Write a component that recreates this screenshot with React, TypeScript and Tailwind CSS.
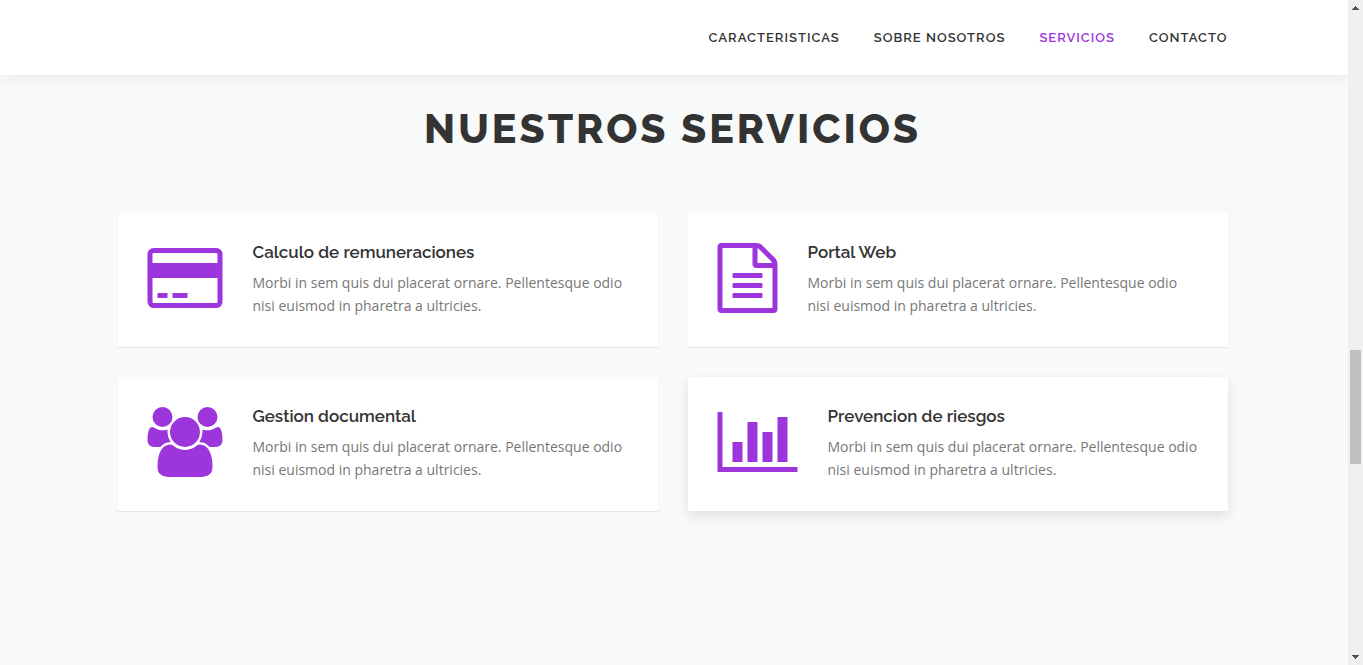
import type { ReactNode } from "react";

const description =
  "Morbi in sem quis dui placerat ornare. Pellentesque odio nisi euismod in pharetra a ultricies.";

const links = [
  { label: "CARACTERISTICAS", href: "#caracteristicas", active: false },
  { label: "SOBRE NOSOTROS", href: "#nosotros", active: false },
  { label: "SERVICIOS", href: "#servicios", active: true },
  { label: "CONTACTO", href: "#contacto", active: false },
];

function CardIcon() {
  return (
    <svg viewBox="13 0 1920 1792" className="h-[70px] w-[75px] shrink-0 overflow-visible" fill="currentColor" aria-hidden="true">
      <path
        transform="matrix(1 0 0 -1 0 1536)"
        d="M1760 1408q66 0 113-47t47-113v-1216q0-66-47-113t-113-47h-1600q-66 0-113 47t-47 113v1216q0 66 47 113t113 47h1600zM160 1280q-13 0-22.5-9.5t-9.5-22.5v-224h1664v224q0 13-9.5 22.5t-22.5 9.5h-1600zM1760 0q13 0 22.5 9.5t9.5 22.5v608h-1664v-608q0-13 9.5-22.5t22.5-9.5h1600zM256 128v128h256v-128h-256zM640 128v128h384v-128h-384z"
      />
    </svg>
  );
}

function FileIcon() {
  return (
    <svg viewBox="141 0 1536 1792" className="h-[70px] w-[60px] shrink-0 overflow-visible" fill="currentColor" aria-hidden="true">
      <path d="M1596 380q28 28 48 76t20 88v1152q0 40-28 68t-68 28h-1344q-40 0-68-28t-28-68v-1600q0-40 28-68t68-28h896q40 0 88 20t76 48zm-444-244v376h376q-10-29-22-41l-313-313q-12-12-41-22zm384 1528v-1024h-416q-40 0-68-28t-28-68v-416h-768v1536h1280zm-1024-864q0-14 9-23t23-9h704q14 0 23 9t9 23v64q0 14-9 23t-23 9h-704q-14 0-23-9t-9-23v-64zm736 224q14 0 23 9t9 23v64q0 14-9 23t-23 9h-704q-14 0-23-9t-9-23v-64q0-14 9-23t23-9h704zm0 256q14 0 23 9t9 23v64q0 14-9 23t-23 9h-704q-14 0-23-9t-9-23v-64q0-14 9-23t23-9h704z" />
    </svg>
  );
}

function UsersIcon() {
  return (
    <svg viewBox="13 0 1920 1792" className="h-[70px] w-[75px] shrink-0 overflow-visible" fill="currentColor" aria-hidden="true">
      <path
        transform="matrix(1 0 0 -1 0 1536)"
        d="M593 640q-162-5-265-128h-134q-82 0-138 40.5t-56 118.5q0 353 124 353 6 0 43.5-21t97.5-42.5 119-21.5q67 0 133 23-5-37-5-66 0-139 81-256zM1664 3q0-120-73-189.5t-194-69.5h-874q-121 0-194 69.5t-73 189.5q0 53 3.5 103.5t14 109 26.5 108.5 43 97.5 62 81 85.5 53.5 111.5 20q10 0 43-21.5t73-48 107-48 135-21.5 135 21.5 107 48 73 48 43 21.5q61 0 111.5-20t85.5-53.5 62-81 43-97.5 26.5-108.5 14-109 3.5-103.5zM640 1280q0-106-75-181t-181-75-181 75-75 181 75 181 181 75 181-75 75-181zM1344 896q0-159-112.5-271.5t-271.5-112.5-271.5 112.5-112.5 271.5 112.5 271.5 271.5 112.5 271.5-112.5 112.5-271.5zM1920 671q0-78-56-118.5t-138-40.5h-134q-103 123-265 128 81 117 81 256 0 29-5 66 66-23 133-23 59 0 119 21.5t97.5 42.5 43.5 21q124 0 124-353zM1792 1280q0-106-75-181t-181-75-181 75-75 181 75 181 181 75 181-75 75-181z"
      />
    </svg>
  );
}

function ChartIcon() {
  return (
    <svg viewBox="13 0 2048 1792" className="h-[70px] w-[80px] shrink-0 overflow-visible" fill="currentColor" aria-hidden="true">
      <path d="M0 128h128v1408h1920v128H0zM384 896h256v512H384zM768 384h256v1024H768zM1152 640h256v768h-256zM1536 256h256v1152h-256z" />
    </svg>
  );
}

function Service({ title, icon, raised = false }: { title: string; icon: ReactNode; raised?: boolean }) {
  return (
    <article
      className={
        raised
          ? "flex items-start gap-[30px] bg-white p-[30px] shadow-[0_5px_12px_rgba(0,0,0,0.1)]"
          : "flex items-start gap-[30px] bg-white p-[30px] shadow-[0_1px_1px_rgba(0,0,0,0.08)]"
      }
    >
      <span className="text-[#9c35db]">{icon}</span>
      <div className="flex flex-col gap-[10px]">
        <h2 className="font-['Raleway','Lato',sans-serif] text-[17px] leading-[18px] font-semibold text-[#333333]">
          {title}
        </h2>
        <p className="font-['Open_Sans',sans-serif] text-sm leading-[23px] text-[#777777]">{description}</p>
      </div>
    </article>
  );
}

function ScrollRail() {
  return (
    <div className="sticky top-0 flex h-screen w-[15px] shrink-0 flex-col items-center bg-[#f0f0f0]" aria-hidden="true">
      <svg viewBox="0 0 15 15" className="size-[15px] shrink-0" fill="#505050" shapeRendering="crispEdges">
        <path d="M7 6h1v1h1v1h1v1h1v1H4V9h1V8h1V7h1z" />
      </svg>
      <div className="flex w-[11px] grow flex-col">
        <div className="grow-[335]" />
        <div className="h-[114px] bg-[#c1c1c1]" />
        <div className="grow-[186]" />
      </div>
      <svg viewBox="0 0 15 15" className="size-[15px] shrink-0" fill="#505050" shapeRendering="crispEdges">
        <path d="M4 5h7v1h-1v1H9v1H8v1H7V8H6V7H5V6H4z" />
      </svg>
    </div>
  );
}

export default function App() {
  return (
    <div className="flex min-h-screen bg-[#f8faf9]">
      <div className="min-w-0 grow">
        <header className="relative bg-white pr-[3px] shadow-[0_0_15px_rgba(0,0,0,0.09)]">
          <nav className="mx-auto flex h-[75px] max-w-[1110px] items-center justify-end gap-[34px]">
            {links.map((link) => (
              <a
                key={link.label}
                href={link.href}
                className={
                  link.active
                    ? "font-['Raleway','Lato',sans-serif] text-[13px] font-semibold tracking-[1px] text-[#9c35db]"
                    : "font-['Raleway','Lato',sans-serif] text-[13px] font-semibold tracking-[1px] text-[#333333]"
                }
              >
                {link.label}
              </a>
            ))}
          </nav>
        </header>
        <main id="servicios" className="pt-[30px] pr-[3px] pb-10">
          <h1 className="text-center font-['Raleway','Lato',sans-serif] text-[41px] leading-[48px] font-extrabold tracking-[3px] text-[#333333]">
            NUESTROS SERVICIOS
          </h1>
          <section className="mx-auto mt-[60px] grid max-w-[1110px] grid-cols-2 gap-[30px]">
            <Service title="Calculo de remuneraciones" icon={<CardIcon />} />
            <Service title="Portal Web" icon={<FileIcon />} />
            <Service title="Gestion documental" icon={<UsersIcon />} />
            <Service title="Prevencion de riesgos" icon={<ChartIcon />} raised />
          </section>
        </main>
      </div>
      <ScrollRail />
    </div>
  );
}
